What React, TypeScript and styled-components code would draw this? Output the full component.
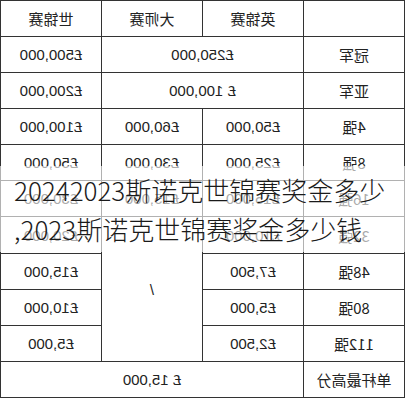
import styled, { createGlobalStyle } from "styled-components"

const GlobalStyle = createGlobalStyle`
    html, body {
        margin: 0;
        padding: 0;
        background: #fff;
    }
`

const Frame = styled.div`
    position: relative;
    width: 405px;
    height: 400px;
    overflow: hidden;
    background: #fff;
`

// the picture is a mirrored scan of the table, so the table is flipped
const Mirror = styled.div`
    transform: scaleX(-1);
`

const Table = styled.table`
    width: 100%;
    height: 398px;
    border-collapse: collapse;
    table-layout: fixed;
    border: 1px solid #8a8a8a;
    font-family: "Liberation Sans", "Noto Sans CJK SC", sans-serif;
    font-size: 15px;
    color: #222;
`

const Cell = styled.td<{ $head?: boolean }>`
    border: 1px solid #333;
    text-align: center;
    vertical-align: middle;
    padding: 0;
    font-family: ${(p) => (p.$head ? '"Noto Sans CJK SC"' : '"Liberation Sans", "Noto Sans CJK SC"')}, sans-serif;
`

const Caption = styled.div`
    position: absolute;
    top: 166px;
    left: 0;
    right: 0;
    padding: 4px 0 4px 14px;
    background: rgba(255, 255, 255, 0.62);
    font-family: "Noto Sans CJK SC", sans-serif;
    font-size: 26px;
    font-weight: 300;
    line-height: 39px;
    color: #1a1a1a;
    white-space: nowrap;
`

type Row = { label: string; cells: { text: string; span?: number; rows?: number }[] }

const rows: Row[] = [
    { label: "冠军", cells: [{ text: "£250,000", span: 2 }, { text: "£500,000" }] },
    { label: "亚军", cells: [{ text: "£ 100,000", span: 2 }, { text: "£200,000" }] },
    { label: "4强", cells: [{ text: "£50,000" }, { text: "£60,000" }, { text: "£100,000" }] },
    { label: "8强", cells: [{ text: "£25,000" }, { text: "£30,000" }, { text: "£50,000" }] },
    { label: "16强", cells: [{ text: "£15,000" }, { text: "£15,000" }, { text: "£30,000" }] },
    { label: "32强", cells: [{ text: "£10,000" }, { text: "/", rows: 4 }, { text: "£20,000" }] },
    { label: "48强", cells: [{ text: "£7,500" }, { text: "£15,000" }] },
    { label: "80强", cells: [{ text: "£5,000" }, { text: "£10,000" }] },
    { label: "112强", cells: [{ text: "£2,500" }, { text: "£5,000" }] },
    { label: "单杆最高分", cells: [{ text: "£ 15,000", span: 3 }] },
]

export default function App() {
    return (
        <>
            <GlobalStyle />
            <Frame>
                <Mirror>
                    <Table>
                        <tbody>
                            <tr>
                                <Cell $head></Cell>
                                <Cell $head>英锦赛</Cell>
                                <Cell $head>大师赛</Cell>
                                <Cell $head>世锦赛</Cell>
                            </tr>
                            {rows.map((r) => (
                                <tr key={r.label}>
                                    <Cell $head>{r.label}</Cell>
                                    {r.cells.map((c, i) => (
                                        <Cell key={i} colSpan={c.span} rowSpan={c.rows}>
                                            {c.text}
                                        </Cell>
                                    ))}
                                </tr>
                            ))}
                        </tbody>
                    </Table>
                </Mirror>
                <Caption>
                    20242023斯诺克世锦赛奖金多少
                    <br />
                    ,2023斯诺克世锦赛奖金多少钱
                </Caption>
            </Frame>
        </>
    )
}
